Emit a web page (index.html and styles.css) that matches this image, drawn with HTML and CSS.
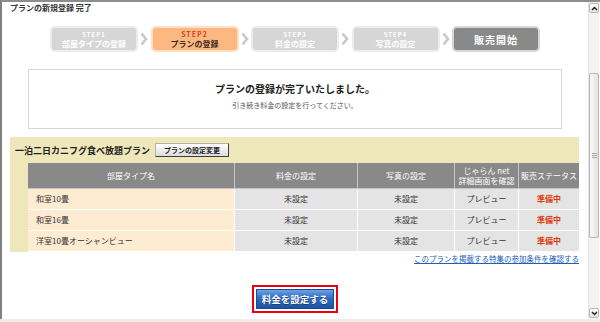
FILE: index.html
```html
<!DOCTYPE html>
<html lang="ja">
<head>
    <meta charset="UTF-8">
    <title>プランの新規登録 完了</title>
    <link rel="stylesheet" href="styles.css">
</head>
<body>
    <div class="window">
        <div class="page">
            <h1 class="title">プランの新規登録 完了</h1>

            <ol class="steps">
                <li class="step">
                    <span class="step-no">STEP1</span>
                    <span class="step-label">部屋タイプの登録</span>
                </li>
                <li class="chevron"><svg width="8" height="14" viewBox="0 0 8 14"><polyline points="1.5,1.5 6,7 1.5,12.5" fill="none" stroke="#c9c9c9" stroke-width="2.6"/></svg></li>
                <li class="step current">
                    <span class="step-no">STEP2</span>
                    <span class="step-label">プランの登録</span>
                </li>
                <li class="chevron"><svg width="8" height="14" viewBox="0 0 8 14"><polyline points="1.5,1.5 6,7 1.5,12.5" fill="none" stroke="#c9c9c9" stroke-width="2.6"/></svg></li>
                <li class="step">
                    <span class="step-no">STEP3</span>
                    <span class="step-label">料金の設定</span>
                </li>
                <li class="chevron"><svg width="8" height="14" viewBox="0 0 8 14"><polyline points="1.5,1.5 6,7 1.5,12.5" fill="none" stroke="#c9c9c9" stroke-width="2.6"/></svg></li>
                <li class="step">
                    <span class="step-no">STEP4</span>
                    <span class="step-label">写真の設定</span>
                </li>
                <li class="chevron"><svg width="8" height="14" viewBox="0 0 8 14"><polyline points="1.5,1.5 6,7 1.5,12.5" fill="none" stroke="#c9c9c9" stroke-width="2.6"/></svg></li>
                <li class="step final">販売開始</li>
            </ol>

            <div class="message">
                <h2>プランの登録が完了いたしました。</h2>
                <p>引き続き料金の設定を行ってください。</p>
            </div>

            <section class="plan">
                <div class="plan-head">
                    <span class="plan-name">一泊二日カニフグ食べ放題プラン</span>
                    <button class="small-btn">プランの設定変更</button>
                </div>
                <table class="rooms">
                    <colgroup>
                        <col style="width:207px">
                        <col style="width:123px">
                        <col style="width:97px">
                        <col style="width:64px">
                        <col style="width:60px">
                    </colgroup>
                    <tr>
                        <th>部屋タイプ名</th>
                        <th>料金の設定</th>
                        <th>写真の設定</th>
                        <th class="two-line">じゃらん net<br>詳細画面を確認</th>
                        <th>販売ステータス</th>
                    </tr>
                    <tr>
                        <td class="room">和室10畳</td>
                        <td>未設定</td>
                        <td>未設定</td>
                        <td>プレビュー</td>
                        <td class="status">準備中</td>
                    </tr>
                    <tr>
                        <td class="room">和室16畳</td>
                        <td>未設定</td>
                        <td>未設定</td>
                        <td>プレビュー</td>
                        <td class="status">準備中</td>
                    </tr>
                    <tr>
                        <td class="room">洋室10畳オーシャンビュー</td>
                        <td>未設定</td>
                        <td>未設定</td>
                        <td>プレビュー</td>
                        <td class="status">準備中</td>
                    </tr>
                </table>
            </section>

            <p class="links"><a href="#">このプランを掲載する特集の参加条件を確認する</a></p>

            <div class="submit">
                <span class="submit-frame"><button class="blue-btn">料金を設定する</button></span>
            </div>
        </div>

        <div class="scrollbar">
            <div class="sb-btn"><svg width="7" height="5" viewBox="0 0 7 5"><polyline points="1,4 3.5,1.5 6,4" fill="none" stroke="#222" stroke-width="1.5"/></svg></div>
            <div class="sb-track">
                <div class="sb-thumb"><svg width="5" height="6" viewBox="0 0 5 6"><path d="M0 0.5h5M0 2.5h5M0 4.5h5" stroke="#a8a8a8" stroke-width="1"/></svg></div>
            </div>
            <div class="sb-btn"><svg width="7" height="5" viewBox="0 0 7 5"><polyline points="1,1 3.5,3.5 6,1" fill="none" stroke="#222" stroke-width="1.5"/></svg></div>
        </div>
    </div>
</body>
</html>
```

FILE: styles.css
```css
body {
    margin: 0;
    background-color: #eeeeee;
    font-family: "Noto Sans CJK JP", "Noto Sans", sans-serif;
    color: #333;
}
.window {
    display: flex;
    width: 600px;
    height: 319px;
    box-sizing: border-box;
    border-top: 2px solid #8d8d8d;
    border-left: 2px solid #7f7f7f;
    background-color: #fff;
    overflow: hidden;
}
.page {
    flex: 1;
}
.title {
    margin: 0;
    padding-left: 8px;
    font-size: 8px;
    line-height: 12px;
    font-weight: bold;
    color: #333;
}

/* steps */
.steps {
    display: flex;
    justify-content: center;
    align-items: center;
    margin: 12px 0 0;
    padding: 0;
    list-style: none;
}
.step {
    display: flex;
    flex-direction: column;
    justify-content: center;
    width: 88px;
    height: 26px;
    box-sizing: border-box;
    border: 2px solid #ececec;
    border-radius: 5px;
    background-color: #d6d6d6;
    color: #fff;
    text-align: center;
    font-weight: bold;
}
.step-no {
    font-size: 6px;
    line-height: 9px;
    letter-spacing: 1px;
}
.step-label {
    font-size: 8px;
    line-height: 10px;
}
.step.current {
    background-color: #fbb981;
    border-color: #fedfc4;
}
.step.current .step-no {
    color: #d8441a;
    font-size: 7px;
}
.step.current .step-label {
    color: #3b2a1f;
}
.step.final {
    background-color: #898989;
    border-color: #d6d6d6;
    font-size: 10px;
    letter-spacing: 1px;
}
.chevron {
    display: flex;
    justify-content: center;
    width: 12.5px;
}

/* message */
.message {
    margin: 17px 26px 0;
    padding: 12px 0 18px;
    border: 1px solid #d8d8d8;
    text-align: center;
}
.message h2 {
    margin: 0;
    font-size: 10px;
    line-height: 14px;
    color: #222;
}
.message p {
    margin: 4px 0 0;
    font-size: 7px;
    line-height: 10px;
    color: #555;
}

/* plan table */
.plan {
    margin: 8px 9px 0 8px;
    background-color: #ede7b9;
}
.plan-head {
    display: flex;
    align-items: center;
    gap: 5px;
    height: 26px;
    padding-left: 5px;
}
.plan-name {
    font-size: 9px;
    font-weight: bold;
    color: #222;
}
.small-btn {
    height: 14px;
    padding: 0 8px;
    border: 1px solid;
    border-color: #b0b0b0 #3c3c3c #3c3c3c #b0b0b0;
    border-radius: 1px;
    background: linear-gradient(#ffffff, #dcdcdc);
    font-family: inherit;
    font-size: 7px;
    font-weight: bold;
    line-height: 12px;
    color: #222;
}
.rooms {
    width: 551px;
    margin-left: 18px;
    border-collapse: separate;
    border-spacing: 0;
    table-layout: fixed;
    font-size: 8px;
}
.rooms th {
    height: 25px;
    padding: 0;
    border-right: 1px solid #c6c6c6;
    border-bottom: 1px solid #c6c6c6;
    background-color: #898989;
    color: #fff;
    font-weight: normal;
    line-height: 10px;
}
.rooms td {
    height: 20px;
    padding: 0;
    border-right: 1px solid #fff;
    border-bottom: 1px solid #fff;
    background-color: #e4e4e4;
    text-align: center;
    line-height: 20px;
}
.rooms th:last-child,
.rooms td:last-child {
    border-right: none;
}
.rooms td.room {
    padding-left: 8px;
    background-color: #fdebd2;
    text-align: left;
}
.rooms td.status {
    color: #dd3b08;
    font-weight: bold;
}

.links {
    margin: 2px 9px 0 0;
    text-align: right;
    font-size: 7.5px;
    line-height: 10px;
}
.links a {
    color: #2160b6;
}

/* submit button */
.submit {
    margin-top: 20px;
    text-align: center;
}
.submit-frame {
    display: inline-block;
    padding: 2px;
    border: 2px solid #e60012;
    line-height: 0;
}
.blue-btn {
    width: 78px;
    height: 20px;
    padding: 0;
    border: 1px solid #1b4a8e;
    background: linear-gradient(#6aa3e6, #2e6cc2 45%, #1c53a4);
    font-family: inherit;
    font-size: 9.5px;
    font-weight: bold;
    line-height: 18px;
    color: #fff;
    text-shadow: 0 1px 0 #1a3f7a;
}

/* scrollbar */
.scrollbar {
    display: flex;
    flex-direction: column;
    width: 11px;
    margin-right: 1px;
    background-color: #f3f3f3;
    border-left: 1px solid #e3e3e3;
}
.sb-btn {
    display: flex;
    justify-content: center;
    align-items: center;
    height: 10px;
    margin: 1px 0;
    box-sizing: border-box;
    border: 1px solid #b8b8b8;
    border-radius: 2px;
    background: linear-gradient(#ffffff, #e3e3e3);
}
.sb-track {
    flex: 1;
    padding-top: 59px;
}
.sb-thumb {
    display: flex;
    justify-content: center;
    align-items: center;
    height: 165px;
    box-sizing: border-box;
    border: 1px solid #b6b6b6;
    border-radius: 2px;
    background: linear-gradient(90deg, #fafafa, #e2e2e2);
}
```
